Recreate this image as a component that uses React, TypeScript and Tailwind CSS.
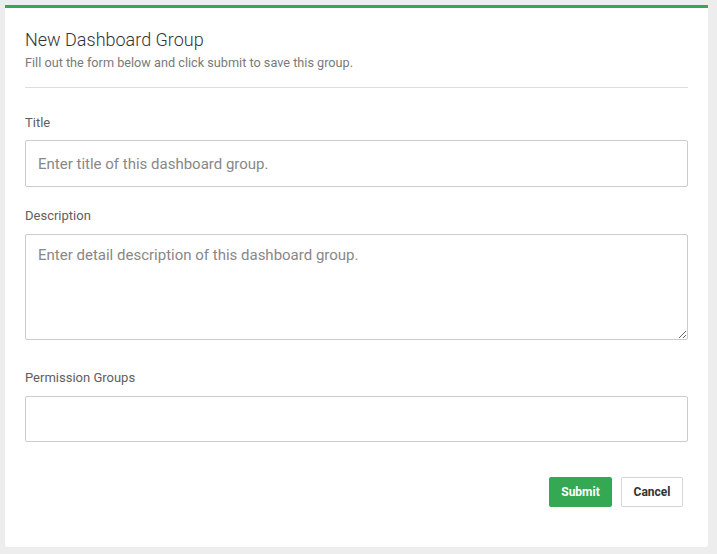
import React from "react";

export default function App() {
  return (
    <div
      className="min-h-screen bg-[#ededed] pt-[5px] pl-[5px] pr-[9px] pb-[7px]"
      style={{ fontFamily: "Roboto, 'Liberation Sans', sans-serif" }}
    >
      <div className="bg-white border-t-[3px] border-[#34a853] rounded-b-[3px] px-[20px] pt-[21px] pb-[40px]">
        <div className="pb-[16px] border-b border-[#dddddd]">
          <h1 className="text-[18px] leading-[22px] font-light text-[#333333]">New Dashboard Group</h1>
          <p className="text-[12.7px] leading-[16px] mt-[4px] text-[#7a7a7a]">
            Fill out the form below and click submit to save this group.
          </p>
        </div>

        <label className="block mt-[27px] text-[13px] leading-[16px] text-[#5e5e5e]">Title</label>
        <input
          type="text"
          placeholder="Enter title of this dashboard group."
          className="block w-full mt-[9px] h-[47px] border border-[#cccccc] rounded-[2px] px-[12px] text-[15px] text-[#333333] placeholder:text-[#888888] outline-none"
        />

        <label className="block mt-[21px] text-[13px] leading-[16px] text-[#5e5e5e]">Description</label>
        <textarea
          placeholder="Enter detail description of this dashboard group."
          className="block w-full mt-[10px] h-[106px] border border-[#cccccc] rounded-[2px] px-[12px] py-[10px] text-[15px] leading-[20px] text-[#333333] placeholder:text-[#888888] outline-none resize-y"
        />

        <label className="block mt-[30px] text-[13px] leading-[16px] text-[#5e5e5e]">Permission Groups</label>
        <div className="mt-[10px] h-[46px] border border-[#cccccc] rounded-[2px]" />

        <div className="flex justify-end gap-[9px] mt-[35px] pr-[5px]">
          <button className="w-[63px] h-[30px] bg-[#34a853] text-white text-[12px] font-bold rounded-[2px]">
            Submit
          </button>
          <button className="w-[62px] h-[30px] bg-white border border-[#d5d5d5] text-[#333333] text-[12px] font-bold rounded-[2px]">
            Cancel
          </button>
        </div>
      </div>
    </div>
  );
}
